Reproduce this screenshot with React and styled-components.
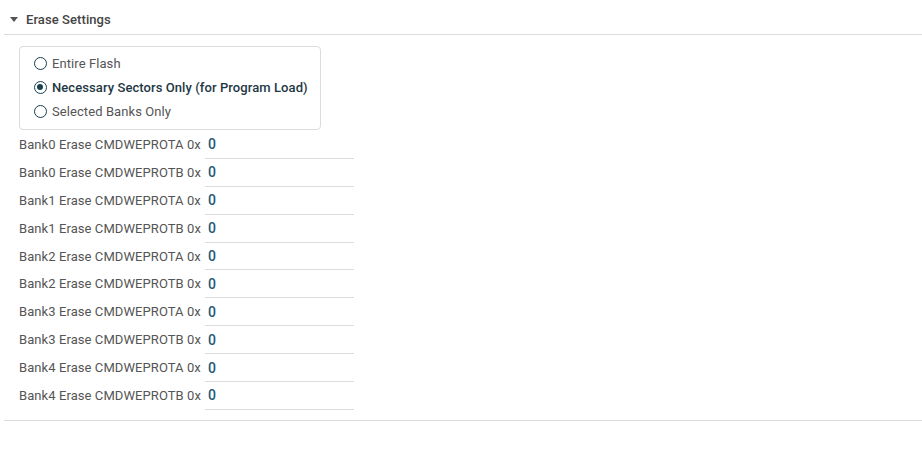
import styled, { createGlobalStyle } from 'styled-components';

const GlobalStyle = createGlobalStyle`
  body {
    margin: 0;
    background: #fff;
    font-family: Roboto, 'Liberation Sans', sans-serif;
    letter-spacing: 0.08px;
  }
`;

const banks = [0, 1, 2, 3, 4].flatMap((n) => [
  `Bank${n} Erase CMDWEPROTA 0x`,
  `Bank${n} Erase CMDWEPROTB 0x`,
]);

const options = [
  { label: 'Entire Flash', checked: false },
  { label: 'Necessary Sectors Only (for Program Load)', checked: true },
  { label: 'Selected Banks Only', checked: false },
];

const App = () => {
  return (
    <>
      <GlobalStyle />
      <Section>
        <Header>
          <Caret />
          <Title>Erase Settings</Title>
        </Header>
        <Body>
          <RadioGroup>
            {options.map((o) => (
              <RadioRow key={o.label}>
                <Radio $checked={o.checked} />
                <RadioLabel $checked={o.checked}>{o.label}</RadioLabel>
              </RadioRow>
            ))}
          </RadioGroup>
          <Fields>
            {banks.map((b) => (
              <FieldRow key={b}>
                <FieldLabel>{b}</FieldLabel>
                <FieldInput>0</FieldInput>
              </FieldRow>
            ))}
          </Fields>
        </Body>
      </Section>
    </>
  );
};

export default App;

const Section = styled.div`
  margin-left: 4px;
  border-bottom: 1px solid #dcdcdc;
  padding-bottom: 10px;
`;

const Header = styled.div`
  display: flex;
  align-items: center;
  height: 35px;
  border-bottom: 1px solid #dcdcdc;
  padding-left: 6px;
  box-sizing: border-box;
  padding-top: 5px;
`;

const Caret = styled.span`
  width: 0;
  height: 0;
  border-left: 4.5px solid transparent;
  border-right: 4.5px solid transparent;
  border-top: 5px solid #555;
  margin-right: 8px;
`;

const Title = styled.span`
  font-size: 13px;
  font-weight: 500;
  color: #444;
`;

const Body = styled.div`
  padding: 11px 0 0 15px;
`;

const RadioGroup = styled.div`
  width: 302px;
  box-sizing: border-box;
  border: 1px solid #dcdcdc;
  border-radius: 4px;
  padding: 4px 0 6px 14px;
  display: flex;
  flex-direction: column;
`;

const RadioRow = styled.div`
  display: flex;
  align-items: center;
  height: 24px;
`;

const Radio = styled.span`
  width: 13px;
  height: 13px;
  box-sizing: border-box;
  border-radius: 50%;
  border: 1.5px solid #17414f;
  margin-right: 5px;
  position: relative;
  &::after {
    content: '';
    display: ${(p) => (p.$checked ? 'block' : 'none')};
    position: absolute;
    left: 2px;
    top: 2px;
    width: 6px;
    height: 6px;
    border-radius: 50%;
    background: #17414f;
  }
`;

const RadioLabel = styled.span`
  font-size: 13px;
  color: ${(p) => (p.$checked ? '#1e3844' : '#555')};
  font-weight: ${(p) => (p.$checked ? 500 : 400)};
`;

const Fields = styled.div`
  display: flex;
  flex-direction: column;
  margin-top: 1px;
`;

const FieldRow = styled.div`
  display: flex;
  align-items: stretch;
  height: 27.9px;
`;

const FieldLabel = styled.span`
  font-size: 13px;
  color: #555;
  width: 186px;
  display: flex;
  align-items: center;
  margin-top: -1px;
`;

const FieldInput = styled.div`
  width: 149px;
  box-sizing: border-box;
  border-bottom: 1px solid #dcdcdc;
  padding-left: 3px;
  font-size: 14px;
  font-weight: 500;
  color: #1d5a78;
  display: flex;
  align-items: center;
`;
